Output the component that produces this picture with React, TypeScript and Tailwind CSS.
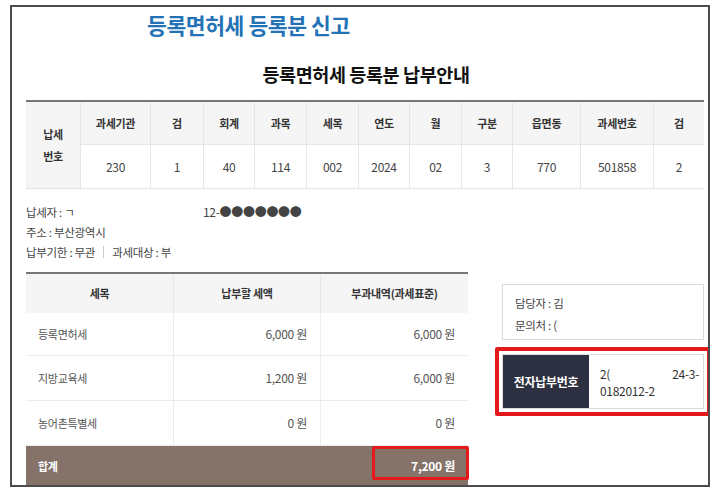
import React from 'react';

const headCols = ['과세기관', '검', '회계', '과목', '세목', '연도', '월', '구분', '읍면동', '과세번호', '검'];
const dataCols = ['230', '1', '40', '114', '002', '2024', '02', '3', '770', '501858', '2'];

const taxRows = [
  { name: '등록면허세', due: '6,000 원', base: '6,000 원', h: 'h-[43px]' },
  { name: '지방교육세', due: '1,200 원', base: '6,000 원', h: 'h-[45px]' },
  { name: '농어촌특별세', due: '0 원', base: '0 원', h: 'h-[45px]' },
];

export default function App() {
  return (
    <div className="min-h-[496px] bg-white pt-[5px] pl-[10px] font-['Noto_Sans_CJK_KR','Noto_Sans',sans-serif] text-[#444]">
      <div className="h-[482px] w-[700px] overflow-hidden border-2 border-[#4b4b4b]">
        {/* page title */}
        <h1 className="mt-[4px] ml-[135px] text-[21.5px] leading-[28px] font-bold tracking-[-0.4px] text-[#2372b6]">
          등록면허세 등록분 신고
        </h1>
        <h2 className="mt-[23px] pl-[12px] text-center text-[18.5px] leading-[24px] font-bold tracking-[-0.4px] text-[#111]">
          등록면허세 등록분 납부안내
        </h2>

        {/* 납세번호 table */}
        <div className="mt-[14px] ml-[14px] grid w-[678px] grid-cols-[54px_70px_53px_51px_52px_52px_51px_52px_51px_68px_73px_51px] grid-rows-[43px_44px] border-t-2 border-[#777] text-[11px] tracking-[-0.3px]">
          <div className="row-span-2 flex items-center justify-center border-b border-[#e3e3e3] bg-[#f5f5f5] text-center leading-[22px] font-bold text-[#333]">
            납세
            <br />
            번호
          </div>
          {headCols.map((c, i) => (
            <div
              key={'h' + i}
              className="flex items-center justify-center border-b border-l border-[#e6e6e6] bg-[#f5f5f5] font-bold text-[#333]"
            >
              {c}
            </div>
          ))}
          {dataCols.map((c, i) => (
            <div
              key={'d' + i}
              className="flex items-center justify-center border-b border-l border-[#e6e6e6] bg-white text-[12px] text-[#444]"
            >
              {c}
            </div>
          ))}
        </div>

        {/* payer info */}
        <div className="mt-[13px] ml-[14px] text-[11.5px] leading-[20px] tracking-[-0.3px] text-[#444]">
          <div className="flex">
            <span className="w-[177px]">납세자 : ㄱ</span>
            <span className="text-[12px]">12-●●●●●●●</span>
          </div>
          <div>주소 : 부산광역시</div>
          <div className="flex items-center">
            <span>납부기한 : 무관</span>
            <span className="mx-[8px] h-[12px] w-px bg-[#ccc]" />
            <span>과세대상 : 부</span>
          </div>
        </div>

        <div className="mt-[10px] ml-[14px] flex">
          {/* amounts table */}
          <div className="w-[442px] text-[11px] tracking-[-0.3px]">
            <div className="grid h-[41px] grid-cols-[147px_147px_148px] border-t-2 border-[#777] bg-[#f5f5f5] font-bold text-[#333]">
              <div className="flex items-center justify-center">세목</div>
              <div className="flex items-center justify-center border-l border-[#e6e6e6]">납부할 세액</div>
              <div className="flex items-center justify-center border-l border-[#e6e6e6]">부과내역(과세표준)</div>
            </div>
            {taxRows.map((r) => (
              <div key={r.name} className={`grid ${r.h} grid-cols-[147px_147px_148px] border-b border-[#ececec] text-[#555]`}>
                <div className="flex items-center pl-[12px]">{r.name}</div>
                <div className="flex items-center justify-end border-l border-[#ececec] pr-[13px] text-[12px]">{r.due}</div>
                <div className="flex items-center justify-end border-l border-[#ececec] pr-[13px] text-[12px]">{r.base}</div>
              </div>
            ))}
            <div className="relative flex h-[40px] items-center justify-between bg-[#85736a] pr-[13px] pl-[12px] font-bold text-white">
              <span>합계</span>
              <span className="text-[12px]">7,200 원</span>
              <div className="absolute top-0 left-[346px] h-[34px] w-[97px] rounded-[2px] border-[3px] border-[#e3191c]" />
            </div>
          </div>

          {/* contact + electronic payment number */}
          <div className="ml-[34px] w-[202px] text-[11.5px] tracking-[-0.3px]">
            <div className="mt-[12px] h-[56px] border border-[#dcdcdc] pt-[7px] pl-[12px] leading-[22px] text-[#444]">
              <div>담당자 : 김</div>
              <div>문의처 : (</div>
            </div>
            <div className="mt-[7px] -mx-[7px] rounded-[2px] border-4 border-[#e3191c] p-[3px]">
              <div className="flex h-[55px] border border-[#dcdcdc] bg-white">
                <div className="flex w-[86px] items-center justify-center bg-[#2d3040] text-[12px] font-bold text-white">
                  전자납부번호
                </div>
                <div className="flex flex-1 flex-col justify-center pr-[4px] pl-[11px] text-[12px] leading-[17px] text-[#333]">
                  <div className="flex justify-between">
                    <span>2(</span>
                    <span>24-3-</span>
                  </div>
                  <div>0182012-2</div>
                </div>
              </div>
            </div>
          </div>
        </div>
      </div>
    </div>
  );
}
